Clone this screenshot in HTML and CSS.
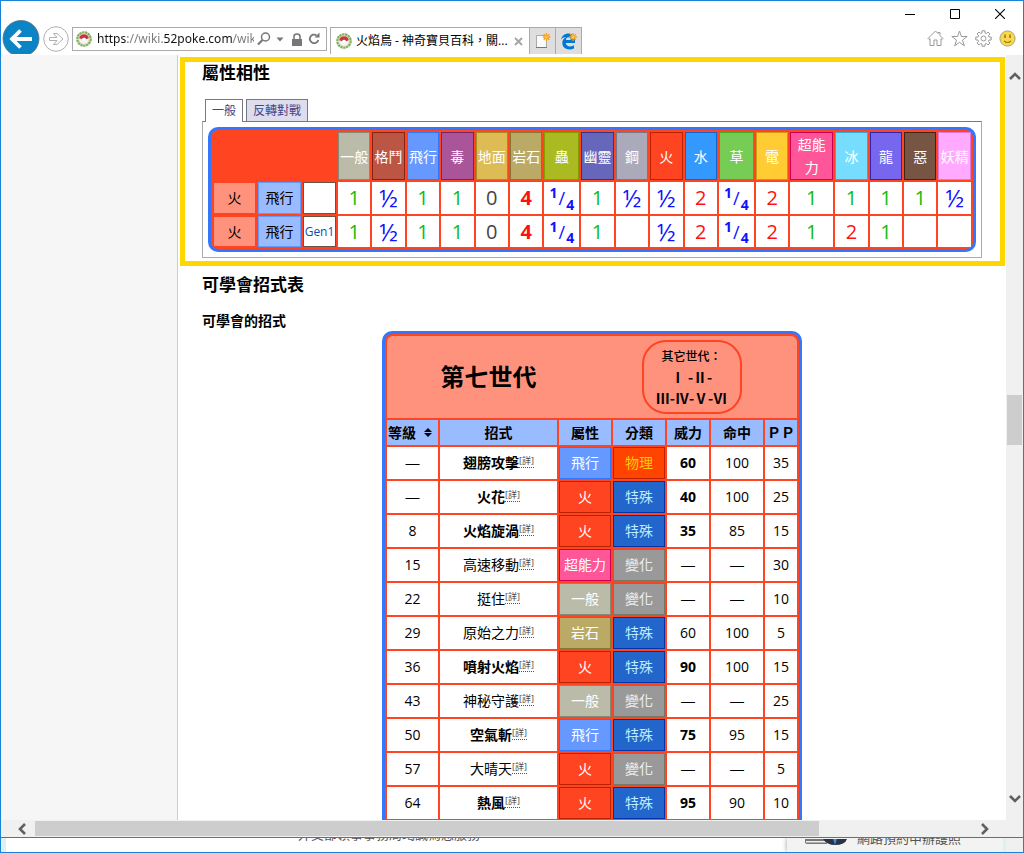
FILE: index.html
```html
<!DOCTYPE html>
<html lang="zh-Hant">
<head>
<meta charset="utf-8">
<title>火焰鳥 - 神奇寶貝百科</title>
<link rel="stylesheet" href="styles.css">
</head>
<body>
<svg width="0" height="0" class="defs" aria-hidden="true">
  <symbol id="favicon" viewBox="0 0 16 16">
    <circle cx="8" cy="8" r="6.6" fill="#fff" stroke="#86b060" stroke-width="2.400" stroke-dasharray="2.4 .5"/>
    <circle cx="8" cy="8" r="5.3" fill="#f4f4f2" stroke="#b9cfa8" stroke-width=".6"/>
    <path d="M3.200 7.2A4.900 4.900 0 0 1 12.800 7.2L10 8.200A2.1 2.1 0 0 0 6 8.200Z" fill="#c8373c"/>
    <circle cx="8" cy="8.4" r="1.5" fill="#fff"/>
  </symbol>
  <symbol id="spark" viewBox="0 0 8 8">
    <path d="M4 0v8M0 4h8M1.2 1.2l5.6 5.6M6.8 1.2L1.2 6.8" stroke="#f5a11c" stroke-width="1.3"/>
    <circle cx="4" cy="4" r="1.5" fill="#ffc455"/>
  </symbol>
</svg>

<div class="window">
  <header class="chrome">
    <button class="plain back" aria-label="上一頁"><svg width="38" height="34" viewBox="0 0 38 34"><circle cx="19" cy="18.5" r="18" fill="#0a84c4" stroke="#5f7480" stroke-width=".8"/><path d="M30 19H11M18.5 10.5L10 19l8.500 8.500" fill="none" stroke="#fff" stroke-width="3.800"/></svg></button>
    <button class="plain forward" aria-label="下一頁"><svg width="26" height="26" viewBox="0 0 26 26"><circle cx="13" cy="13" r="12.300" fill="#fff" stroke="#b0b0b0"/><path d="M6.500 11.500h7.500L10.500 7.500h3.500l6 5.500-6 5.500h-3.500l3.500-4H6.500z" fill="#fff" stroke="#b0b0b0"/></svg></button>
    <form class="address">
      <svg class="fav" width="16" height="16"><use href="#favicon"/></svg>
      <input class="url" type="text" aria-label="網址" value="https://wiki.52poke.com/wik">
      <button type="button" class="plain" aria-label="搜尋"><svg width="14" height="14" viewBox="0 0 14 14" fill="none" stroke="#777"><circle cx="8.500" cy="5" r="4" stroke-width="1.500"/><path d="M5.500 8L1 12.500" stroke-width="2.200"/></svg></button>
      <button type="button" class="plain drop" aria-label="歷程記錄"><svg width="8" height="5" viewBox="0 0 8 5"><path d="M.5.500h7L4 4.500z" fill="#777"/></svg></button>
      <svg class="lock" width="10" height="13" viewBox="0 0 10 13"><rect y="6" width="10" height="7" fill="#777"/><path d="M2 6V3.500a3 2.500 0 0 1 6 0V6" fill="none" stroke="#777" stroke-width="1.600"/></svg>
      <button type="button" class="plain" aria-label="重新整理"><svg width="13" height="14" viewBox="0 0 13 14"><path d="M8.500 3.300A4.300 4.300 0 1 0 10.300 8" fill="none" stroke="#777" stroke-width="1.800"/><path d="M6.500 5.500H11.500V.500z" fill="#777"/></svg></button>
    </form>
    <div class="tab">
      <svg width="16" height="16"><use href="#favicon"/></svg>
      <span class="tab-title">火焰鳥 - 神奇寶貝百科，關...</span>
      <button class="plain" aria-label="關閉索引標籤"><svg width="9" height="9" viewBox="0 0 9 9"><path d="M1 1l7 7M8 1L1 8" stroke="#a5a5a5" stroke-width="1.900"/></svg></button>
    </div>
    <button class="tab-button" aria-label="新索引標籤"><svg width="18" height="18" viewBox="0 0 18 18"><path d="M3.500 3.500h10v12h-10z" fill="#fafafa" stroke="#aaa"/><path d="M3 15.500h11" stroke="#777"/><use href="#spark" x="9.500" y="1" width="8" height="8"/></svg></button>
    <button class="tab-button" aria-label="以 Edge 開啟"><svg width="18" height="18" viewBox="0 0 18 18"><path d="M2 7.500C3 3.500 6 1.500 9.500 1.500c4.500 0 6.500 3.500 6.500 7V11H6.800c.2 4 5.500 4 8.200 2.300v3.200C10 18.700 3.300 17 3.300 11c0-3 1.700-5 4-6C5 5 3 6 2 7.500zM6.900 8h4.800c0-3.600-4.600-3.600-4.800 0z" fill="#0078d7"/><use href="#spark" x="10" y="1" width="8" height="8"/></svg></button>
    <div class="corner">
      <div class="controls">
        <button class="plain" aria-label="最小化"><svg width="10" height="10" viewBox="0 0 10 10"><path d="M0 5.500h10" stroke="#000"/></svg></button>
        <button class="plain" aria-label="最大化"><svg width="10" height="10" viewBox="0 0 10 10"><path d="M.5.500h9v9h-9z" fill="none" stroke="#000"/></svg></button>
        <button class="plain" aria-label="關閉"><svg width="10" height="10" viewBox="0 0 10 10"><path d="M0 0l10 10M10 0L0 10" stroke="#000" stroke-width="1.100"/></svg></button>
      </div>
      <div class="tools">
        <button class="plain" aria-label="首頁"><svg width="17" height="17" viewBox="0 0 17 17" fill="none" stroke="#999"><path d="M1 8.500L8.500 1 11 3.500V2.500h2v3L16 8.500l-1 1-1-.8v6.800h-4V10H7v5.500H3V8.700l-1 .8z"/></svg></button>
        <button class="plain" aria-label="我的最愛"><svg width="17" height="17" viewBox="0 0 17 17" fill="none" stroke="#999"><path d="M8.500 1l1.900 5.500h5.800l-4.700 3.600 1.800 5.700-4.800-3.500-4.800 3.500 1.800-5.700L.8 6.500h5.800z"/></svg></button>
        <button class="plain" aria-label="工具"><svg width="17" height="17" viewBox="0 0 17 17" fill="none" stroke="#999"><circle cx="8.500" cy="8.500" r="2.500"/><path d="M7 3V.8h3V3l1.400.6L13 2l2 2-1.600 1.600.6 1.400h2.200v3H14l-.6 1.400L15 13l-2 2-1.600-1.600-1.400.6v2.200H7V14l-1.400-.6L4 15l-2-2 1.600-1.600L3 10H.8V7H3l.6-1.400L2 4l2-2 1.600 1.600z"/></svg></button>
        <button class="plain" aria-label="意見反應"><svg width="17" height="17" viewBox="0 0 17 17"><circle cx="8.500" cy="8.500" r="7.600" fill="#fbd84b" stroke="#a6a08a"/><path d="M6 4.500v3.500M11 4.500v3.500" stroke="#9a7a20" stroke-width="1.600"/><path d="M5 11q3.500 3 7 0" fill="none" stroke="#9a7a20" stroke-width="1.200"/></svg></button>
      </div>
    </div>
  </header>

  <div class="viewport">
    <aside class="sidebar"></aside>
    <main class="content">
      <section class="matchups">
        <h2>屬性相性</h2>
        <div class="tabs" role="tablist">
          <button class="pane-tab active" role="tab" aria-selected="true">一般</button>
          <button class="pane-tab" role="tab" aria-selected="false">反轉對戰</button>
        </div>
        <div class="pane">
          <table class="types">
            <colgroup><col class="c-type" span="2"><col class="c-gen"><col span="6"><col class="c-quarter"><col span="4"><col class="c-quarter"><col><col class="c-type"><col span="4"></colgroup>
            <thead>
              <tr>
                <td colspan="3"></td>
                <th class="normal">一般</th><th class="fighting">格鬥</th><th class="flying">飛行</th><th class="poison">毒</th><th class="ground">地面</th><th class="rock">岩石</th><th class="bug">蟲</th><th class="ghost">幽靈</th><th class="steel">鋼</th><th class="fire">火</th><th class="water">水</th><th class="grass">草</th><th class="electric">電</th><th class="psychic">超能力</th><th class="ice">冰</th><th class="dragon">龍</th><th class="dark">惡</th><th class="fairy">妖精</th>
              </tr>
            </thead>
            <tbody>
              <tr>
                <th class="fire-light">火</th><th class="flying-light">飛行</th><td class="gen"></td>
                <td class="x1">1</td><td class="half">½</td><td class="x1">1</td><td class="x1">1</td><td class="x0">0</td><td class="x4">4</td><td class="quarter"><sup>1</sup>/<sub>4</sub></td><td class="x1">1</td><td class="half">½</td><td class="half">½</td><td class="x2">2</td><td class="quarter"><sup>1</sup>/<sub>4</sub></td><td class="x2">2</td><td class="x1">1</td><td class="x1">1</td><td class="x1">1</td><td class="x1">1</td><td class="half">½</td>
              </tr>
              <tr>
                <th class="fire-light">火</th><th class="flying-light">飛行</th><td class="gen"><a href="#gen1">Gen1</a></td>
                <td class="x1">1</td><td class="half">½</td><td class="x1">1</td><td class="x1">1</td><td class="x0">0</td><td class="x4">4</td><td class="quarter"><sup>1</sup>/<sub>4</sub></td><td class="x1">1</td><td></td><td class="half">½</td><td class="x2">2</td><td class="quarter"><sup>1</sup>/<sub>4</sub></td><td class="x2">2</td><td class="x1">1</td><td class="x2">2</td><td class="x1">1</td><td></td><td></td>
              </tr>
            </tbody>
          </table>
        </div>
      </section>

      <section class="learnset">
        <h2>可學會招式表</h2>
        <h3>可學會的招式</h3>
        <table class="moves">
          <colgroup><col class="m-level"><col class="m-name"><col class="m-type"><col class="m-type"><col class="m-power"><col class="m-type"><col class="m-pp"></colgroup>
          <thead>
            <tr>
              <td class="banner" colspan="7">
                <div class="banner-row">
                  <div class="banner-title">第七世代</div>
                  <div class="other-gens"><small>其它世代：</small><a href="#g1">Ⅰ</a> -<a href="#g2">Ⅱ</a>-<br><a href="#g3">Ⅲ</a>-<a href="#g4">Ⅳ</a>-<a href="#g5">Ⅴ</a>-<a href="#g6">Ⅵ</a></div>
                </div>
              </td>
            </tr>
            <tr class="labels">
              <th><button class="plain sort">等級<svg width="8" height="9" viewBox="0 0 8 9"><path d="M0 4l4-4 4 4zM0 5h8L4 9z"/></svg></button></th><th>招式</th><th>屬性</th><th>分類</th><th>威力</th><th>命中</th><th>ＰＰ</th>
            </tr>
          </thead>
          <tbody>
            <tr><td class="none">—</td><td><b>翅膀攻擊</b><sup><a href="#m1">[詳]</a></sup></td><td class="flying">飛行</td><td class="physical">物理</td><td><b>60</b></td><td>100</td><td>35</td></tr>
            <tr><td class="none">—</td><td><b>火花</b><sup><a href="#m2">[詳]</a></sup></td><td class="fire">火</td><td class="special">特殊</td><td><b>40</b></td><td>100</td><td>25</td></tr>
            <tr><td>8</td><td><b>火焰旋渦</b><sup><a href="#m3">[詳]</a></sup></td><td class="fire">火</td><td class="special">特殊</td><td><b>35</b></td><td>85</td><td>15</td></tr>
            <tr><td>15</td><td>高速移動<sup><a href="#m4">[詳]</a></sup></td><td class="psychic">超能力</td><td class="status">變化</td><td class="none">—</td><td class="none">—</td><td>30</td></tr>
            <tr><td>22</td><td>挺住<sup><a href="#m5">[詳]</a></sup></td><td class="normal">一般</td><td class="status">變化</td><td class="none">—</td><td class="none">—</td><td>10</td></tr>
            <tr><td>29</td><td>原始之力<sup><a href="#m6">[詳]</a></sup></td><td class="rock">岩石</td><td class="special">特殊</td><td>60</td><td>100</td><td>5</td></tr>
            <tr><td>36</td><td><b>噴射火焰</b><sup><a href="#m7">[詳]</a></sup></td><td class="fire">火</td><td class="special">特殊</td><td><b>90</b></td><td>100</td><td>15</td></tr>
            <tr><td>43</td><td>神秘守護<sup><a href="#m8">[詳]</a></sup></td><td class="normal">一般</td><td class="status">變化</td><td class="none">—</td><td class="none">—</td><td>25</td></tr>
            <tr><td>50</td><td><b>空氣斬</b><sup><a href="#m9">[詳]</a></sup></td><td class="flying">飛行</td><td class="special">特殊</td><td><b>75</b></td><td>95</td><td>15</td></tr>
            <tr><td>57</td><td>大晴天<sup><a href="#m10">[詳]</a></sup></td><td class="fire">火</td><td class="status">變化</td><td class="none">—</td><td class="none">—</td><td>5</td></tr>
            <tr><td>64</td><td><b>熱風</b><sup><a href="#m11">[詳]</a></sup></td><td class="fire">火</td><td class="special">特殊</td><td><b>95</b></td><td>90</td><td>10</td></tr>
          </tbody>
        </table>
      </section>
    </main>
    <div class="vbar">
      <button class="plain" aria-label="向上捲動"><svg width="12" height="10" viewBox="0 0 12 10"><path d="M1 8l5-5 5 5" fill="none" stroke="#606060" stroke-width="2.600"/></svg></button>
      <div class="vtrack"><div class="vthumb"></div></div>
      <button class="plain" aria-label="向下捲動"><svg width="12" height="10" viewBox="0 0 12 10"><path d="M1 2l5 5 5-5" fill="none" stroke="#606060" stroke-width="2.600"/></svg></button>
    </div>
  </div>
  <div class="hbar">
    <button class="plain" aria-label="向左捲動"><svg width="10" height="12" viewBox="0 0 10 12"><path d="M8 1L3 6l5 5" fill="none" stroke="#606060" stroke-width="2.600"/></svg></button>
    <div class="htrack"><div class="hthumb"></div></div>
    <button class="plain" aria-label="向右捲動"><svg width="10" height="12" viewBox="0 0 10 12"><path d="M2 1l5 5-5 5" fill="none" stroke="#606060" stroke-width="2.600"/></svg></button>
  </div>
</div>

<div class="behind">
  <div class="behind-main">外交部領事事務局竭誠為您服務</div>
  <div class="behind-card"><svg width="42" height="8" viewBox="0 0 42 8"><path d="M0 0h22v5H3Q0 5 0 3z" fill="#777"/><path d="M1 2h22v1.500H1z" fill="#eee"/><path d="M18 0h24q-2 6-12 6-8 0-12-6z" fill="#2b3244"/><path d="M28 0l2 6 2-6z" fill="#2f8fd8"/></svg><span>網路預約申辦護照</span></div>
  <div class="behind-edge"></div>
</div>
</body>
</html>
```
FILE: styles.css
```css
* { box-sizing: border-box; }
body {
  margin: 0;
  height: 100vh;
  display: flex;
  flex-direction: column;
  overflow: hidden;
  background: #fff;
  color: #000;
  font: 14px/20px "Open Sans", "Noto Sans CJK TC", sans-serif;
}
h2, h3 { margin: 0; font-weight: 700; }
h2 { font-size: 17px; line-height: 22px; }
h3 { font-size: 14px; line-height: 20px; }
a { color: inherit; text-decoration: none; }
button, input { font: inherit; }
svg { display: block; flex: none; }
.defs { position: absolute; }
.plain { border: 0; padding: 0; background: none; color: inherit; }

.window {
  flex: 1;
  min-height: 0;
  display: flex;
  flex-direction: column;
  border: 1px solid #1883d7;
}

/* browser chrome */
.chrome {
  flex: none;
  height: 54px;
  display: flex;
  align-items: flex-end;
  padding: 0 7px 1px 1px;
}
.forward { margin: 0 3px 2px; }
.address {
  width: 255px;
  height: 24px;
  margin: 0 3px 3px 0;
  padding: 0 5px 0 3px;
  display: flex;
  align-items: center;
  border: 1px solid #ababab;
}
.url {
  flex: 1;
  min-width: 0;
  margin: 0 3px 0 5px;
  padding: 0;
  border: 0;
  outline: 0;
  font: 12px/20px "Noto Sans", sans-serif;
  color: transparent;
  background: linear-gradient(90deg, #111 0 30px, #777 30px 67px, #111 67px 136px, #777 136px);
  -webkit-background-clip: text;
  background-clip: text;
}
.drop { margin: 0 8px 0 5px; }
.lock { margin-right: 6px; }
.tab {
  width: 199px;
  height: 27px;
  padding: 0 6px 0 5px;
  display: flex;
  align-items: center;
  gap: 4px;
  border: 1px solid #ababab;
  border-width: 1px 0 0 1px;
  font-size: 12px;
}
.tab-title { flex: 1; white-space: nowrap; }
.tab-button {
  width: 26px;
  height: 27px;
  padding: 0 3px;
  border: 1px solid #ababab;
  border-width: 1px 0 0 1px;
  background: #dedede;
}
.tab-button + .tab-button { width: 27px; border-right-width: 1px; }
.corner { flex: 1; display: flex; flex-direction: column; align-items: flex-end; }
.controls { display: flex; gap: 35px; padding-right: 11px; margin-bottom: 11px; }
.tools { display: flex; gap: 7px; margin-bottom: 7px; }

/* page */
.viewport { flex: 1; min-height: 0; display: flex; }
.sidebar { flex: none; width: 177px; background: #f6f6f6; border-right: 1px solid #a7d7f9; }
.content { flex: 1; min-width: 0; overflow: hidden; padding: 2px 1px 0 2px; }
.matchups { border: 5px solid #ffd700; padding: 0 18px 3px 17px; }
.learnset { padding: 8px 23px 0 22px; }
.learnset h3 { margin-top: 15px; }

.tabs { display: flex; align-items: flex-start; gap: 3px; margin-top: 15px; padding-left: 3px; }
.pane-tab {
  height: 22px;
  padding: 0 6px;
  border: 1px solid #778;
  border-bottom: 0;
  background: #dde;
  color: #448;
  font-size: 12px;
  line-height: 20px;
}
.pane-tab.active { height: 23px; margin-bottom: -1px; background: #fff; z-index: 1; }
.pane { padding: 5px; border: 1px solid #aaa; border-top-color: #778; }

/* type chart */
table { border-collapse: separate; border-spacing: 2px; table-layout: fixed; background: #ff4422; }
th, td { padding: 0; text-align: center; white-space: nowrap; }
.types { width: 100%; border: 3px solid #3377ff; border-radius: 10px; }
.types th { font-weight: 400; }
.types thead tr { height: 48px; }
.types thead th { white-space: normal; line-height: 23px; }
.types tbody tr { height: 32px; }
.types tbody tr:last-child { height: 31px; }
.types tbody td { background: #fff; font-size: 20px; line-height: 28px; }
.c-type { width: 43px; }
.c-gen { width: 33px; }
.c-quarter { width: 35px; }
.types tbody .gen { border: 1px solid #665544; color: #0b4fb3; font-size: 12px; }
.x0 { color: #444; }
.x1 { color: #11bb11; }
.x2 { color: #ff1111; }
.x4 { color: #ff1111; font-weight: 700; }
.types tbody .half { color: #1111ff; font-size: 24px; }
.types tbody .quarter { color: #1111ff; font-size: 18px; line-height: 20px; }
.quarter sup, .quarter sub { font-size: 14px; font-weight: 700; line-height: 0; }
.quarter sup { margin-right: 1px; }
.quarter sub { margin-left: 1px; }

.normal, .fighting, .flying, .poison, .ground, .rock, .bug, .ghost, .steel, .fire, .water, .grass,
.electric, .psychic, .ice, .dragon, .dark, .fairy { color: #fff; border: 1px solid; }
.normal { background: #bbbbaa; border-color: #888877; }
.fighting { background: #bb5544; border-color: #882211; }
.flying { background: #6699ff; border-color: #3377ff; }
.poison { background: #aa5599; border-color: #772266; }
.ground { background: #ddbb55; border-color: #aa8822; }
.rock { background: #bbaa66; border-color: #887733; }
.bug { background: #aabb22; border-color: #889900; }
.ghost { background: #6666bb; border-color: #333388; }
.steel { background: #aaaabb; border-color: #777788; }
.fire { background: #ff4422; border-color: #bb2200; }
.water { background: #3399ff; border-color: #1166cc; }
.grass { background: #77cc55; border-color: #44aa22; }
.electric { background: #ffcc33; border-color: #cc9911; }
.psychic { background: #ff5599; border-color: #cc0055; }
.ice { background: #77ddff; border-color: #33aadd; }
.dragon { background: #7766ee; border-color: #3322aa; }
.dark { background: #775544; border-color: #442211; }
.fairy { background: #ffaaff; border-color: #dd77dd; }
.fire-light { background: #ff927d; border: 1px solid #ff4422; }
.flying-light { background: #99bbff; border: 1px solid #6699ff; }

/* learnset */
.moves { width: 420px; margin: 0 auto; border: 3px solid #3377ff; border-radius: 10px 10px 0 0; }
.m-level { width: 51px; }
.m-name { width: 117px; }
.m-type { width: 52px; }
.m-power { width: 42px; }
.m-pp { width: 32px; }
.banner { background: #ff927d; border-radius: 6px 6px 0 0; }
.banner-row { display: grid; grid-template-columns: 1fr 1fr; align-items: center; justify-items: center; padding: 4px 4px 4px 0; }
.banner-title { font-size: 24px; line-height: 32px; font-weight: 700; }
.other-gens {
  width: 100px;
  padding: 3px 0;
  border: 2px solid #ff4422;
  border-radius: 24px;
  font-family: "Noto Sans CJK TC", sans-serif;
  font-weight: 700;
  line-height: 21px;
}
.other-gens small { display: block; font-size: 12px; font-weight: 500; line-height: 22px; }
.labels { height: 25px; }
.labels th { background: #99bbff; }
.sort { display: flex; align-items: center; gap: 8px; padding-left: 1px; font-weight: 700; }
.moves tbody tr { height: 32px; }
.moves tbody td { background: #fff; }
.moves .none { font-family: "Liberation Sans", sans-serif; }
.moves sup { font-size: 9px; line-height: 0; vertical-align: 4px; }
.moves sup a { color: #444; border-bottom: 1px dotted #555; }
.moves tbody .flying { background: #6699ff; }
.moves tbody .fire { background: #ff4422; }
.moves tbody .psychic { background: #ff5599; }
.moves tbody .normal { background: #bbbbaa; }
.moves tbody .rock { background: #bbaa66; }
.moves tbody .physical { background: #ff4400; border: 1px solid #bb2200; color: #ffcc00; }
.moves tbody .special { background: #2266cc; border: 1px solid #0033aa; color: #bbeeff; }
.moves tbody .status { background: #999; border: 1px solid #777766; color: #eee; }

/* scroll bars */
.vbar { flex: none; width: 17px; display: flex; flex-direction: column; align-items: center; padding: 16px 0; background: #f0f0f0; }
.vtrack { flex: 1; align-self: stretch; padding: 0 1px; display: grid; grid-template-rows: 314fr 50fr 349fr; }
.vthumb { grid-row: 2; background: #cdcdcd; }
.hbar { flex: none; height: 17px; display: flex; align-items: center; padding: 0 33px 0 16px; background: #f0f0f0; }
.htrack { flex: 1; height: 15px; margin-left: 8px; display: grid; grid-template-columns: 784fr 161fr; }
.hthumb { background: #cdcdcd; }

/* page behind the window */
.behind {
  flex: none;
  height: 15px;
  display: flex;
  align-items: flex-end;
  overflow: hidden;
  border: 1px solid #1883d7;
  border-top: 0;
  font-size: 13px;
  line-height: 18px;
  color: #555;
}
.behind-main { flex: 1; padding: 0 0 9px 292px; border-left: 5px solid #ddf0f3; }
.behind-card { display: flex; align-items: flex-end; gap: 10px; width: 216px; height: 14px; padding: 0 0 5px 18px; background: #f3f3f3; box-shadow: 0 0 5px #999; }
.behind-card span { white-space: nowrap; }
.behind-edge { width: 20px; height: 14px; background: #f0f0f0; border-left: 3px solid #ddf0f3; }
```
